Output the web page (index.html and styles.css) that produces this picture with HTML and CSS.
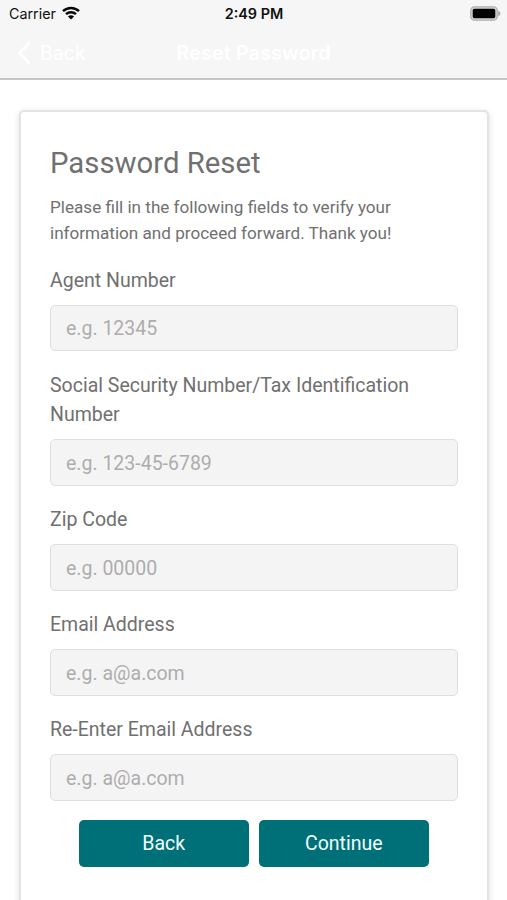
FILE: index.html
```html
<!DOCTYPE html>
<html lang="en">
<head>
<meta charset="utf-8">
<title>Reset Password</title>
<link rel="stylesheet" href="styles.css">
</head>
<body>
<header class="topbar">
  <div class="status">
    <div class="carrier"><span>Carrier</span>
      <svg class="wifi" viewBox="0 0 18 14" width="18" height="14" fill="none" stroke="#080808" stroke-width="2.5"><path d="M1 5.1C5.5.8 12.5.8 17 5.1M4 8.2c2.8-2.6 7.2-2.6 10 0"/><path d="M9 13.5 5.9 10.4c1.7-1.5 4.5-1.5 6.2 0Z" fill="#080808" stroke="none"/></svg>
    </div>
    <div class="time">2:49 PM</div>
    <svg class="battery" viewBox="0 0 31 15" width="31" height="15"><rect x=".8" y=".8" width="26.4" height="13.4" rx="3.6" fill="#d6d6d6" stroke="#b0b0b0" stroke-width="1.3"/><rect x="2.7" y="2.8" width="22.6" height="9.4" rx="1.6" fill="#000"/><path d="M28.2 4.8c3 1 3 4.4 0 5.4Z" fill="#aaa"/></svg>
  </div>
  <nav class="nav">
    <a class="nav-back"><svg viewBox="0 0 14 24" width="14" height="24" fill="none" stroke="#fff" stroke-width="2.8"><path d="M12.5 1.5 2.5 12l10 10.5"/></svg><span>Back</span></a>
    <div class="nav-title">Reset Password</div>
    <div></div>
  </nav>
</header>
<main class="card">
  <h1>Password Reset</h1>
  <p>Please fill in the following fields to verify your<br>information and proceed forward. Thank you!</p>
  <form>
    <div class="field"><label for="agent">Agent Number</label><input id="agent" placeholder="e.g. 12345"></div>
    <div class="field"><label for="ssn">Social Security Number/Tax Identification Number</label><input id="ssn" placeholder="e.g. 123-45-6789"></div>
    <div class="field"><label for="zip">Zip Code</label><input id="zip" placeholder="e.g. 00000"></div>
    <div class="field"><label for="email">Email Address</label><input id="email" placeholder="e.g. a@a.com"></div>
    <div class="field"><label for="email2">Re-Enter Email Address</label><input id="email2" placeholder="e.g. a@a.com"></div>
    <div class="actions"><button type="button">Back</button><button type="button">Continue</button></div>
  </form>
</main>
</body>
</html>
```
FILE: styles.css
```css
* { box-sizing: border-box; }
html { height: 100%; overflow: hidden; }
body {
  margin: 0;
  height: 900px;
  overflow: hidden;
  display: flex;
  flex-direction: column;
  background: #fff;
  color: #707070;
  font-family: Roboto, "Liberation Sans", sans-serif;
}
.topbar {
  flex: none;
  height: 80px;
  background: #f6f6f6;
  border-bottom: 2px solid #c6c6c6;
  font-family: Inter, "Liberation Sans", sans-serif;
}
.status {
  display: grid;
  grid-template-columns: 1fr auto 1fr;
  align-items: center;
  height: 27px;
  padding: 0 6px 0 9px;
  color: #111;
}
.carrier { display: flex; align-items: center; gap: 6px; font-size: 14.3px; }
.wifi { margin-top: -2px; }
.time { margin-right: 2px; font-size: 14.4px; font-weight: 600; }
.battery { justify-self: end; }
.nav {
  display: grid;
  grid-template-columns: 1fr auto 1fr;
  align-items: center;
  height: 51px;
  padding: 0 17px;
  color: #fff;
  font-size: 19.6px;
}
.nav-back { display: flex; align-items: center; gap: 9px; }
.nav-title { font-size: 20px; font-weight: 600; }
.card {
  flex: none;
  height: 830px;
  margin: 30px 18.5px 0 19px;
  padding: 34px 29px 0;
  border: 2px solid #e4e4e4;
  border-radius: 5px;
  box-shadow: 0 2px 6px rgba(0, 0, 0, .14);
}
h1 { margin: 0; font-size: 29.3px; font-weight: 400; line-height: 35px; }
p { margin: 14.4px 0 19px; font-size: 17.1px; line-height: 25.7px; white-space: nowrap; }
.field { margin-bottom: 19.4px; }
label { display: block; margin-bottom: 9.4px; font-size: 19.5px; line-height: 29.6px; }
input {
  display: block;
  width: 100%;
  height: 46.6px;
  padding: 1px 15px 0;
  border: 1.5px solid #dfdfdf;
  border-radius: 5px;
  background: #f5f4f5;
  font: 19.5px Roboto, "Liberation Sans", sans-serif;
}
input::placeholder { color: #adadad; opacity: 1; }
.actions { display: flex; justify-content: center; gap: 10px; }
button {
  width: 170px;
  height: 46.6px;
  padding: 0;
  border: 0;
  border-radius: 5px;
  background: #007078;
  color: #f4ffff;
  font: 19.5px Roboto, "Liberation Sans", sans-serif;
}
```
